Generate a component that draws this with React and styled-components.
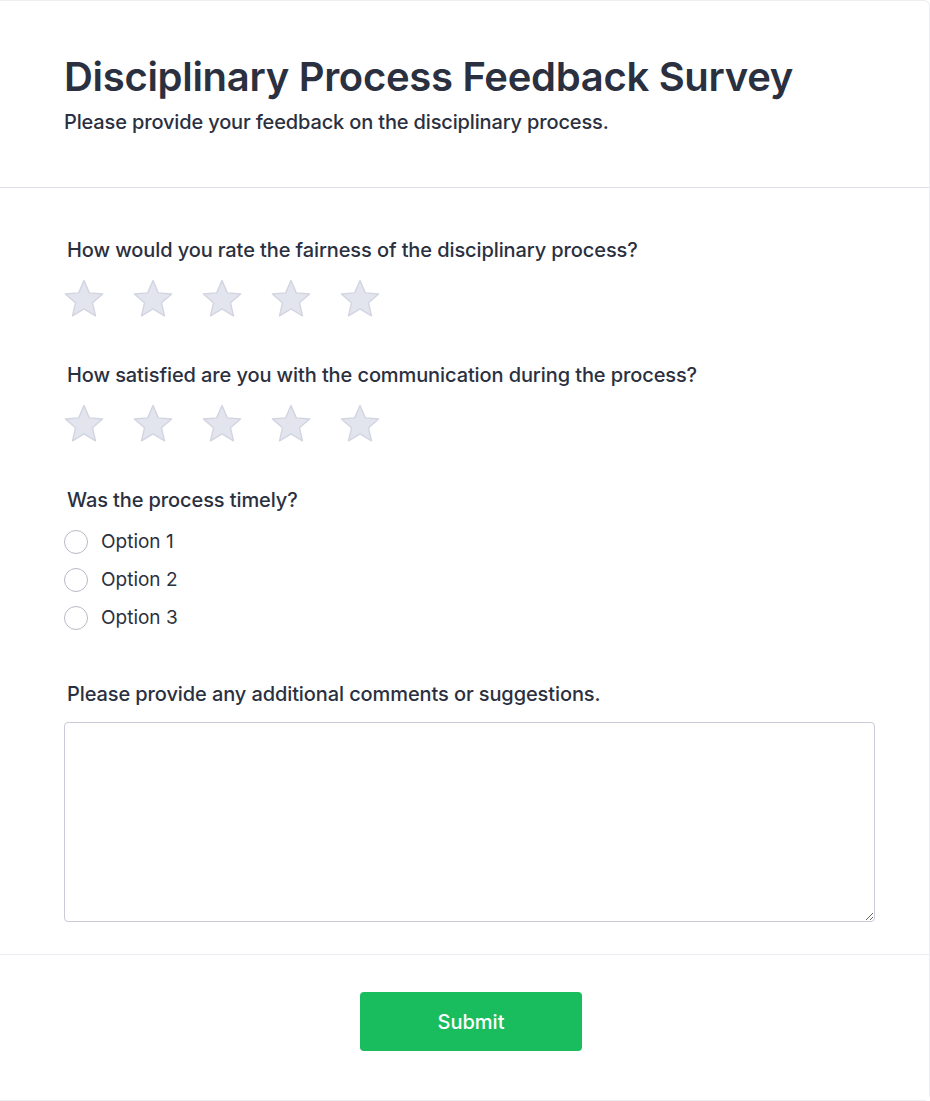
import React, { useState } from 'react';
import styled, { createGlobalStyle } from 'styled-components';

const GlobalStyle = createGlobalStyle`
  html, body {
    margin: 0;
    padding: 0;
    background: #ffffff;
  }
  body {
    font-family: Inter, "Noto Sans", sans-serif;
    color: #2e3342;
  }
`;

const Card = styled.div`
  width: 930px;
  min-height: 1101px;
  box-sizing: border-box;
  border: 1px solid #eceef2;
  border-left: none;
  border-radius: 0 6px 6px 0;
  background: #ffffff;
  display: flex;
  flex-direction: column;
`;

const Header = styled.header`
  padding: 52px 64px 51px;
  border-bottom: 1px solid #dcdee8;
`;

const Title = styled.h1`
  margin: 0;
  font-size: 40px;
  line-height: 48px;
  font-weight: 600;
  color: #2b3040;
  letter-spacing: -0.3px;
`;

const Subtitle = styled.p`
  margin: 7px 0 0;
  font-size: 20px;
  line-height: 28px;
  font-weight: 500;
  color: #2b3040;
  letter-spacing: -0.15px;
`;

const Body = styled.div`
  padding: 48px 54px 32px 64px;
  display: flex;
  flex-direction: column;
  border-bottom: 1px solid #ebecf1;
`;

const Question = styled.div`
  display: flex;
  flex-direction: column;
  margin-bottom: ${({ $gap }) => $gap || 0}px;
`;

const Label = styled.label`
  font-size: 20px;
  line-height: 28px;
  font-weight: 500;
  color: #2b3040;
  letter-spacing: -0.1px;
  padding-left: 3px;
  margin-bottom: ${({ $mb }) => $mb || 15}px;
`;

const Stars = styled.div`
  display: flex;
  gap: 29px;
`;

const StarButton = styled.button`
  width: 40px;
  height: 40px;
  padding: 0;
  border: none;
  background: none;
  cursor: pointer;
  display: flex;
  align-items: center;
  justify-content: center;

  svg {
    overflow: visible;
  }

  svg path {
    fill: ${({ $active }) => ($active ? '#f7b500' : '#e3e5ee')};
    stroke: ${({ $active }) => ($active ? '#e5a600' : '#d2d5e1')};
  }
`;

const Options = styled.div`
  display: flex;
  flex-direction: column;
  gap: 14px;
`;

const OptionRow = styled.label`
  display: flex;
  align-items: center;
  gap: 13px;
  cursor: pointer;
  font-size: 19px;
  line-height: 24px;
  color: #2b3040;
`;

const Radio = styled.span`
  width: 24px;
  height: 24px;
  box-sizing: border-box;
  border-radius: 50%;
  border: 1px solid ${({ $checked }) => ($checked ? '#19bd5e' : '#b7bbc6')};
  box-shadow: ${({ $checked }) => ($checked ? 'inset 0 0 0 5px #fff' : 'none')};
  background: ${({ $checked }) => ($checked ? '#19bd5e' : '#fff')};
`;

const TextArea = styled.textarea`
  width: 100%;
  height: 200px;
  box-sizing: border-box;
  border: 1px solid #c9ccd8;
  border-radius: 4px;
  padding: 10px 12px;
  font-family: inherit;
  font-size: 16px;
  color: #2b3040;
  resize: vertical;
  outline: none;
`;

const Footer = styled.footer`
  flex: 1;
  display: flex;
  justify-content: center;
  padding: 37px 0 0 13px;
  background: #ffffff;
`;

const SubmitButton = styled.button`
  width: 222px;
  height: 59px;
  border: none;
  border-radius: 4px;
  background: #1abd5e;
  color: #ffffff;
  font-family: inherit;
  font-size: 20px;
  font-weight: 500;
  cursor: pointer;
`;

const StarIcon = () => (
  <svg width="40" height="40" viewBox="0 0 40 40">
    <path
      d="M20 1.5 L25.3 13.9 L38.6 15 L28.5 23.8 L31.5 36.8 L20 29.8 L8.5 36.8 L11.5 23.8 L1.4 15 L14.7 13.9 Z"
      strokeWidth="1.4"
      strokeLinejoin="round"
    />
  </svg>
);

const StarRating = ({ value, onChange }) => (
  <Stars>
    {[1, 2, 3, 4, 5].map((n) => (
      <StarButton key={n} type="button" $active={n <= value} onClick={() => onChange(n)} aria-label={`${n} star`}>
        <StarIcon />
      </StarButton>
    ))}
  </Stars>
);

export default function App() {
  const [fairness, setFairness] = useState(0);
  const [comms, setComms] = useState(0);
  const [timely, setTimely] = useState(null);

  return (
    <>
      <GlobalStyle />
      <Card>
        <Header>
          <Title>Disciplinary Process Feedback Survey</Title>
          <Subtitle>Please provide your feedback on the disciplinary process.</Subtitle>
        </Header>

        <Body>
          <Question $gap={42}>
            <Label>How would you rate the fairness of the disciplinary process?</Label>
            <StarRating value={fairness} onChange={setFairness} />
          </Question>

          <Question $gap={42}>
            <Label>How satisfied are you with the communication during the process?</Label>
            <StarRating value={comms} onChange={setComms} />
          </Question>

          <Question $gap={50}>
            <Label $mb={16}>Was the process timely?</Label>
            <Options>
              {['Option 1', 'Option 2', 'Option 3'].map((opt) => (
                <OptionRow key={opt} onClick={() => setTimely(opt)}>
                  <Radio $checked={timely === opt} />
                  {opt}
                </OptionRow>
              ))}
            </Options>
          </Question>

          <Question>
            <Label $mb={14}>Please provide any additional comments or suggestions.</Label>
            <TextArea />
          </Question>
        </Body>

        <Footer>
          <div>
            <SubmitButton type="button">Submit</SubmitButton>
          </div>
        </Footer>
      </Card>
    </>
  );
}
